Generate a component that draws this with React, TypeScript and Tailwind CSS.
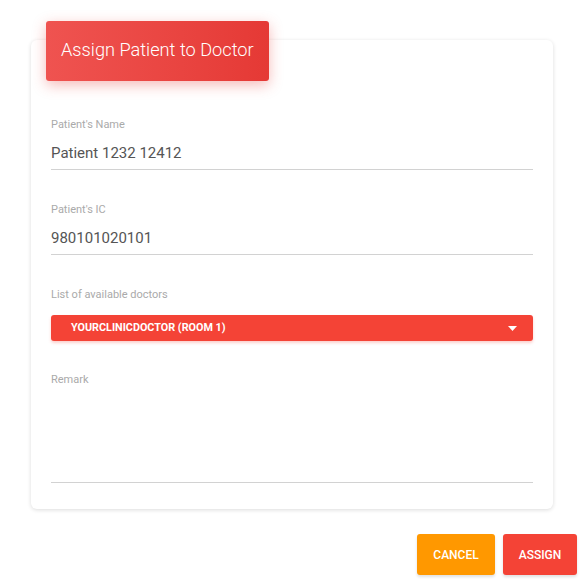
import React from "react";

export default function App() {
  return (
    <div className="min-h-[579px] w-[586px] bg-white" style={{ fontFamily: "Roboto, 'Liberation Sans', sans-serif" }}>
      <div className="pt-[40px] pl-[31px]">
        <div className="flow-root w-[522px] rounded-[6px] bg-white shadow-[0_1px_4px_rgba(0,0,0,0.14)] px-[20px] pb-[26px]">
          <div className="-mt-[19px] -ml-[5px] w-[223px] h-[60px] rounded-[3px] bg-gradient-to-r from-[#ef5350] to-[#e53935] shadow-[0_4px_14px_rgba(229,57,53,0.35)] flex items-center pl-[15px] pb-[2px]">
            <span className="text-white text-[18.2px] font-light leading-none">Assign Patient to Doctor</span>
          </div>
          <div className="pt-[37px]">
            <div className="text-[11px] leading-[14px] text-[#aaaaaa]">Patient's Name</div>
            <div className="mt-[11px] text-[15px] leading-[20px] text-[#555555] pb-[6px] border-b border-[#d2d2d2]">Patient 1232 12412</div>
            <div className="mt-[33px] text-[11px] leading-[14px] text-[#aaaaaa]">Patient's IC</div>
            <div className="mt-[11px] text-[15px] leading-[20px] text-[#555555] pb-[6px] border-b border-[#d2d2d2]">980101020101</div>
            <div className="mt-[33px] text-[11px] leading-[14px] text-[#aaaaaa]">List of available doctors</div>
            <div className="mt-[13px] h-[26px] rounded-[3px] bg-[#f44336] shadow-[0_2px_3px_rgba(244,67,54,0.25)] flex items-center justify-between pl-[20px] pr-[16px]">
              <span className="text-white text-[10.8px] font-bold leading-none">YOURCLINICDOCTOR (ROOM 1)</span>
              <svg width="9" height="5" viewBox="0 0 9 5"><polygon points="0,0 9,0 4.5,5" fill="white" /></svg>
            </div>
            <div className="mt-[32px] text-[11px] leading-[14px] text-[#aaaaaa]">Remark</div>
            <div className="h-[96px] border-b border-[#d2d2d2]"></div>
          </div>
        </div>
      </div>
      <div className="flex justify-end gap-[8px] pr-[9px] mt-[25px]">
        <button className="w-[78px] h-[41px] rounded-[3px] bg-[#ff9800] text-white text-[12px] font-medium shadow-[0_2px_3px_rgba(0,0,0,0.12)]">CANCEL</button>
        <button className="w-[74px] h-[41px] rounded-[3px] bg-[#f44336] text-white text-[12px] font-medium shadow-[0_2px_3px_rgba(0,0,0,0.12)]">ASSIGN</button>
      </div>
    </div>
  );
}
